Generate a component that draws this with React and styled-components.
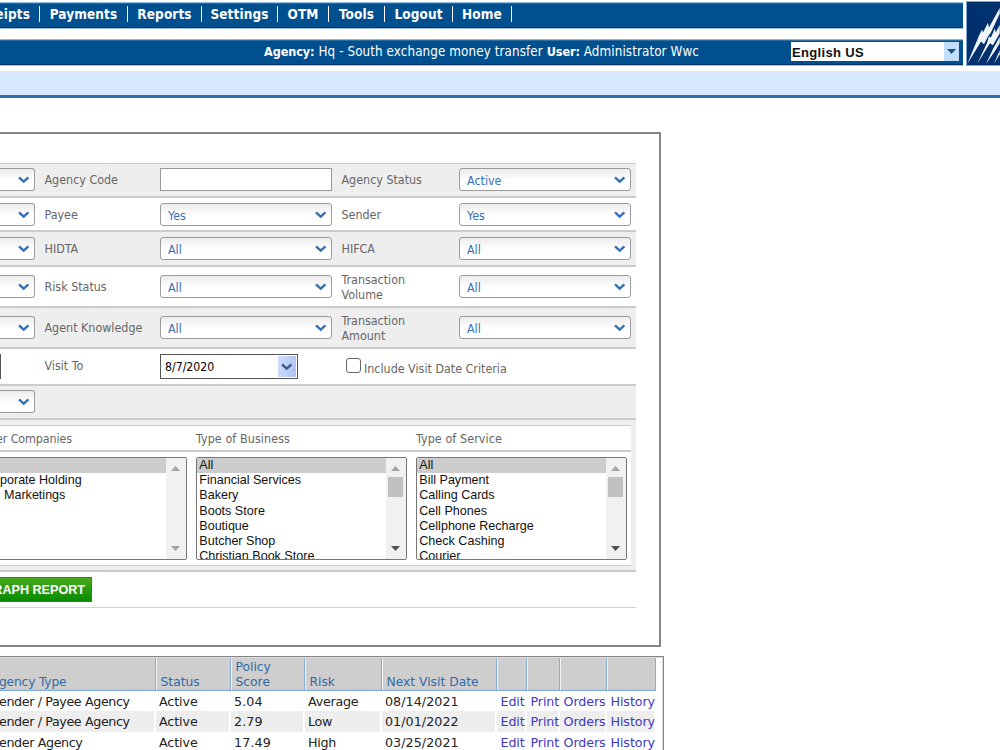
import React from 'react';
import styled, { createGlobalStyle } from 'styled-components';

const navy = '#00508f';
const labelGray = '#666';
const rowGray = '#eee';
const lineGray = '#cbcbcb';
const linkBlue = '#3a6fb5';
const tahoma = "'DejaVu Sans Condensed', 'DejaVu Sans', sans-serif";
const verdana = "'DejaVu Sans', sans-serif";
const arial = "'Liberation Sans', sans-serif";

const GlobalStyle = createGlobalStyle`
  * {
    box-sizing: border-box;
  }

  body {
    background: #fff;
    margin: 0;
    overflow: hidden;
  }
`;

const Page = styled.div`
  font-family: ${tahoma};
  height: 750px;
  overflow: hidden;
  width: 1000px;
`;

const Header = styled.header`
  display: flex;
  height: 71px;
  justify-content: space-between;
  padding-top: 1px;
`;

const Bars = styled.div`
  display: flex;
  flex-direction: column;
  gap: 10px;
  padding-top: 1px;
  width: 963px;
`;

const Bar = styled.div`
  background: ${navy};
  border-bottom: 1px solid #9fc0da;
  border-top: 1px solid #8db8dc;
  box-shadow: inset 0 -1px #00365f, inset 0 1px #2f6c9e;
  display: flex;
  height: 27px;
`;

const NavItem = styled.a`
  border-right: 1px solid #fff;
  color: #fff;
  display: flex;
  font-size: 13.5px;
  font-weight: bold;
  height: 16px;
  justify-content: center;
  letter-spacing: 0.1px;
  line-height: 16px;
  margin-top: 3px;
  white-space: nowrap;
  width: ${({ $width }) => $width}px;

  &:first-child {
    justify-content: flex-end;
    padding-right: 9px;
  }
`;

const UserInfo = styled.div`
  color: #fff;
  flex: 1;
  font-size: 13.3px;
  letter-spacing: 0.1px;
  line-height: 23px;
  padding-left: 264px;
  white-space: nowrap;

  b {
    font-size: 12.5px;
    letter-spacing: -0.05px;
  }
`;

const Language = styled.div`
  align-items: center;
  background: #fff;
  color: #111;
  display: flex;
  font: bold 13px ${arial};
  height: 19px;
  justify-content: space-between;
  letter-spacing: 0.35px;
  margin: 2px 4px 0 0;
  padding-left: 1px;
  width: 168px;
`;

const LanguageText = styled.span`
  padding-top: 1px;
`;

const LanguageArrow = styled.span`
  align-items: center;
  background: #c3dffb;
  display: flex;
  height: 19px;
  justify-content: center;
  width: 15px;
`;

const Logo = styled.svg`
  background: #00306e;
  border: 1px solid #7fa8d4;
  border-right: 0;
  height: 65px;
  width: 34px;
`;

const SubBar = styled.div`
  background: #d8e8ff;
  border-bottom: 3px solid #2f69ae;
  height: 27px;
  margin-bottom: 34px;
`;

const Panel = styled.section`
  border: 2px solid #858585;
  border-left: 0;
  height: 515px;
  margin-bottom: 9px;
  padding-top: 29px;
  width: 661px;
`;

const Form = styled.div`
  border-top: 1px solid ${lineGray};
  width: 636px;
`;

const Row = styled.div`
  align-items: flex-start;
  background: ${({ $shaded }) => ($shaded ? rowGray : '#fff')};
  border-bottom: 2px solid ${lineGray};
  display: grid;
  grid-template-columns: 44px 116px 181px 118px 177px;
  height: ${({ $height }) => $height}px;
  padding-top: ${({ $pad }) => $pad}px;
`;

const Label = styled.label`
  align-self: flex-start;
  color: ${labelGray};
  display: flex;
  flex-direction: column;
  font-size: 12.4px;
  height: 23px;
  justify-content: center;
  line-height: 15px;
  padding-left: 0.5px;
  white-space: nowrap;
`;

const Select = styled.div`
  align-items: center;
  background: linear-gradient(#ececec, #fff 55%);
  border: 1px solid #9c9c9c;
  border-radius: ${({ $cut }) => ($cut ? '0 3px 3px 0' : '3px')};
  border-left-width: ${({ $cut }) => ($cut ? 0 : 1)}px;
  color: ${linkBlue};
  display: flex;
  font-size: 12.4px;
  height: 23px;
  justify-content: space-between;
  padding: 1px 4px 0 7px;
  width: ${({ $cut }) => ($cut ? 35 : 172)}px;
`;

const TextInput = styled.div`
  background: #fff;
  border: 1px solid #999;
  height: 23px;
  width: 172px;
`;

const DateInput = styled.div`
  align-items: center;
  background: #fff;
  border: 1px solid #555;
  color: #000;
  display: flex;
  font-size: 12.2px;
  height: 25px;
  justify-content: space-between;
  padding: 0 1px 0 4px;
  width: 138px;
`;

const DateArrow = styled.span`
  align-items: center;
  background: linear-gradient(100deg, #d2dffc, #a9c1f3);
  display: flex;
  height: 21px;
  justify-content: center;
  width: 18px;
`;

const CutInput = styled.div`
  border: solid #555;
  border-width: 1px 1px 1px 0;
  height: 25px;
  width: 1px;
`;

const CheckLine = styled.div`
  align-items: center;
  color: ${labelGray};
  display: flex;
  font-size: 12.4px;
  gap: 3px;
  grid-column: 4 / 6;
  height: 24px;
  padding-left: 5px;
`;

const Checkbox = styled.span`
  background: #fff;
  border: 1px solid #666;
  border-radius: 3px;
  height: 15px;
  margin-bottom: 1px;
  width: 15px;
`;

const CheckText = styled.span`
  padding-top: 5px;
`;

const ListsFrame = styled.div`
  background: ${rowGray};
  border-bottom: 2px solid ${lineGray};
  height: 152px;
  padding: 5px 5px 5px 0;
`;

const Lists = styled.div`
  background: #fff;
  border-bottom: 1px solid ${lineGray};
  border-top: 1px solid ${lineGray};
  height: 141px;
`;

const ListTitles = styled.div`
  border-bottom: 2px solid ${lineGray};
  color: ${labelGray};
  display: grid;
  font-size: 12.4px;
  grid-template-columns: 196px 220px 215px;
  height: 26px;
  line-height: 26px;
  white-space: nowrap;
`;

const ListTitle = styled.span`
  letter-spacing: ${({ $shift }) => ($shift ? -0.1 : 0.1)}px;
  margin-left: ${({ $shift }) => $shift || 0}px;
`;

const ListBoxes = styled.div`
  display: flex;
  gap: 9px;
  padding-top: 5px;
`;

const ListBox = styled.div`
  border: 1px solid #767676;
  border-left-width: ${({ $cut }) => ($cut ? 0 : 1)}px;
  border-radius: ${({ $cut }) => ($cut ? '0 2px 2px 0' : '2px')};
  display: flex;
  height: 103px;
  overflow: hidden;
  width: ${({ $cut }) => ($cut ? 187 : 211)}px;
`;

const Options = styled.div`
  color: #111;
  flex: 1;
  font: 12.55px/15.2px ${arial};
`;

const Option = styled.div`
  background: ${({ $selected }) => ($selected ? '#cdcdcd' : 'transparent')};
  height: 15.2px;
  padding-left: ${({ $indent }) => ($indent === undefined ? 2.3 : $indent)}px;
  white-space: pre;
`;

const Scrollbar = styled.div`
  align-items: center;
  background: #f1f1f1;
  display: flex;
  flex-direction: column;
  justify-content: space-between;
  padding: 8px 2px 8px 0;
  width: 20px;
`;

const Thumb = styled.div`
  background: #c1c1c1;
  height: 20px;
  margin: 6px 0 auto;
  width: 15px;
`;

const GraphButton = styled.button`
  background: linear-gradient(#48ab1f, #078a00);
  border: solid #2b8a12;
  border-width: 1px 1px 1px 0;
  color: #fff;
  display: flex;
  font: bold 12.6px ${arial};
  height: 25px;
  justify-content: flex-end;
  line-height: 24px;
  margin-top: 5px;
  overflow: hidden;
  padding: 0 6px 0 0;
  white-space: nowrap;
  width: 92px;
`;

const Rule = styled.div`
  border-bottom: 1px solid #d3d3d3;
  height: 6px;
`;

const Results = styled.section`
  border: 1px solid #858585;
  border-bottom: 0;
  border-left: 0;
  box-shadow: inset -1px 1px #ddd;
  height: 100px;
  padding-top: 1px;
  width: 664px;
`;

const ResultRow = styled.div`
  display: grid;
  font: 12.7px ${verdana};
  grid-template-columns: 156px 75px 74px 77px 115px 30px 33px 47px 49px;
  height: ${({ $head }) => ($head ? 32.5 : 20.5)}px;
`;

const HeadCell = styled.div`
  align-items: flex-end;
  background: #cecece;
  border-bottom: 1px solid #83aade;
  border-right: 1px solid #83aade;
  box-shadow: inset ${({ $first }) => ($first ? 0 : 1)}px 0 #f4f6fa, inset 0 -1px #b4c8e8;
  color: #336aa5;
  display: flex;
  font-size: 12.3px;
  letter-spacing: ${({ $first }) => ($first ? -0.2 : 0)}px;
  line-height: 15px;
  padding-left: ${({ $first }) => ($first ? 0 : 4.5)}px;
  white-space: pre-line;
`;

const Cell = styled.div`
  background: ${({ $shaded }) => ($shaded ? rowGray : '#fff')};
  border-bottom: 1px solid #fff;
  border-right: 2px solid #fff;
  color: ${({ $link }) => ($link ? '#4038c4' : '#222')};
  letter-spacing: ${({ $spacing }) => $spacing || 0}px;
  line-height: 21px;
  padding-left: ${({ $pad }) => $pad}px;
  white-space: nowrap;
`;

const Cut = styled.span`
  margin-left: -1px;
  white-space: nowrap;
`;

const navItems = [
  ['eipts', 40], ['Payments', 88], ['Reports', 74], ['Settings', 76],
  ['OTM', 51], ['Tools', 56], ['Logout', 68], ['Home', 59],
];

const filterRows = [
  { height: 34, pad: 4, code: 'Agency Code', status: 'Agency Status', right: 'Active' },
  { height: 34, pad: 5, code: 'Payee', left: 'Yes', status: 'Sender', right: 'Yes' },
  { height: 35, pad: 5, code: 'HIDTA', left: 'All', status: 'HIFCA', right: 'All' },
  { height: 41, pad: 8, code: 'Risk Status', left: 'All', status: ['Transaction', 'Volume'], right: 'All' },
  { height: 41, pad: 8, code: 'Agent Knowledge', left: 'All', status: ['Transaction', 'Amount'], right: 'All' },
];

const businesses = [
  'All', 'Financial Services', 'Bakery', 'Boots Store', 'Boutique', 'Butcher Shop', 'Christian Book Store',
];

const services = [
  'All', 'Bill Payment', 'Calling Cards', 'Cell Phones', 'Cellphone Recharge', 'Check Cashing', 'Courier',
];

const headings = ['gency Type', 'Status', 'Policy\nScore', 'Risk', 'Next Visit Date', '', '', '', ''];

const results = [
  ['ender / Payee Agency', 'Active', '5.04', 'Average', '08/14/2021'],
  ['ender / Payee Agency', 'Active', '2.79', 'Low', '01/01/2022'],
  ['ender Agency', 'Active', '17.49', 'High', '03/25/2021'],
];

// letter spacing of each data column
const columnSpacing = [-0.38, -0.1, 0.1, -0.25, 0.05];

const Chevron = ({ color = '#3470b5' }) => (
  <svg width="12" height="8" viewBox="0 0 12 8">
    <path d="M1 1.4 L5.7 5.7 L10.4 1.4" fill="none" stroke={color} strokeWidth="2.4" />
  </svg>
);

const Triangle = ({ up, color }) => (
  <svg width="9" height="5" viewBox="0 0 9 5">
    <path d={up ? 'M0 5 L4.5 0 L9 5Z' : 'M0 0 L4.5 5 L9 0Z'} fill={color} />
  </svg>
);

const SelectBox = ({ value, cut }) => (
  <Select $cut={cut}>
    <span>{value}</span>
    <Chevron />
  </Select>
);

const ListScroll = ({ active }) => (
  <Scrollbar>
    <Triangle up color="#a3a3a3" />
    {active && <Thumb />}
    <Triangle color={active ? '#505050' : '#a3a3a3'} />
  </Scrollbar>
);

const OptionList = ({ items }) => (
  <ListBox>
    <Options>
      {items.map((item, i) => <Option key={item} $selected={i === 0}>{item}</Option>)}
    </Options>
    <ListScroll active />
  </ListBox>
);

const PageHeader = () => (
  <Header>
    <Bars>
      <Bar>
        {navItems.map(([name, width]) => <NavItem key={name} $width={width}>{name}</NavItem>)}
      </Bar>
      <Bar>
        <UserInfo>
          <b>Agency:</b> Hq - South exchange money transfer <b>User:</b> Administrator Wwc
        </UserInfo>
        <Language>
          <LanguageText>English US</LanguageText>
          <LanguageArrow><Triangle color="#175488" /></LanguageArrow>
        </Language>
      </Bar>
    </Bars>
    <Logo viewBox="0 0 33 64">
      <g fill="#f2f7fc">
        <path d="M0 63 L12 34 L15 28 L16 31 L21 21 L22 26 L33 6 L33 12 L24 31 L21 35 L17 43 L14 40Z" />
        <path d="M10 63 L20 42 L22 35 L24 36 L28 27 L29 31 L33 23 L33 32 L26 44 L23 42Z" />
        <path d="M19 63 L27 46 L30 41 L33 35 L33 42 L28 50Z" />
        <path d="M27 63 L33 49 L33 53Z" />
      </g>
    </Logo>
  </Header>
);

const FilterForm = () => (
  <Form>
    {filterRows.map(({ height, pad, code, left, status, right }, i) => (
      <Row key={code} $height={height} $pad={pad} $shaded={i % 2 === 0}>
        <SelectBox cut />
        <Label>{code}</Label>
        {left ? <SelectBox value={left} /> : <TextInput />}
        <Label>{[].concat(status).map(line => <span key={line}>{line}</span>)}</Label>
        <SelectBox value={right} />
      </Row>
    ))}
    <Row $height={37} $pad={5}>
      <CutInput />
      <Label>Visit To</Label>
      <DateInput>
        8/7/2020
        <DateArrow><Chevron color="#3f5785" /></DateArrow>
      </DateInput>
      <CheckLine>
        <Checkbox />
        <CheckText>Include Visit Date Criteria</CheckText>
      </CheckLine>
    </Row>
    <Row $height={34} $pad={4} $shaded>
      <SelectBox cut />
    </Row>
    <ListsFrame>
      <Lists>
        <ListTitles>
          <ListTitle $shift={-4}>er Companies</ListTitle>
          <ListTitle>Type of Business</ListTitle>
          <ListTitle>Type of Service</ListTitle>
        </ListTitles>
        <ListBoxes>
          <ListBox $cut>
            <Options>
              <Option $selected />
              <Option $indent={0}>porate Holding</Option>
              <Option $indent={4}>Marketings</Option>
            </Options>
            <ListScroll />
          </ListBox>
          <OptionList items={businesses} />
          <OptionList items={services} />
        </ListBoxes>
      </Lists>
    </ListsFrame>
    <GraphButton>RAPH REPORT</GraphButton>
    <Rule />
  </Form>
);

const ResultsTable = () => (
  <Results>
    <ResultRow $head>
      {headings.map((text, i) => (
        <HeadCell key={`${text}${i}`} $first={i === 0}>{i === 0 ? <Cut>{text}</Cut> : text}</HeadCell>
      ))}
    </ResultRow>
    {results.map((row, i) => (
      <ResultRow key={row[4]}>
        {row.map((text, j) => (
          <Cell key={text} $shaded={i === 1} $pad={j === 0 ? 0 : 3} $spacing={columnSpacing[j]}>
            {j === 0 ? <Cut>{text}</Cut> : text}
          </Cell>
        ))}
        {['Edit', 'Print', 'Orders', 'History'].map(text => (
          <Cell key={text} $shaded={i === 1} $pad={3.5} $spacing={-0.1} $link>{text}</Cell>
        ))}
      </ResultRow>
    ))}
  </Results>
);

const App = () => (
  <Page>
    <GlobalStyle />
    <PageHeader />
    <SubBar />
    <Panel>
      <FilterForm />
    </Panel>
    <ResultsTable />
  </Page>
);

export default App;
